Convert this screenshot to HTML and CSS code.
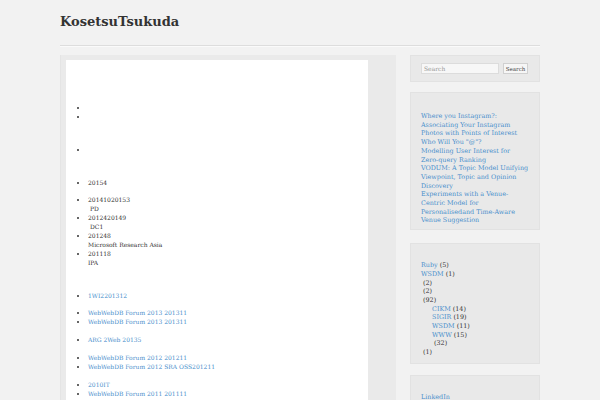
FILE: index.html
```html
<!DOCTYPE html>
<html>
<head>
<meta charset="utf-8">
<link rel="stylesheet" href="styles.css">
</head>
<body>
<div class="page">
  <header class="site-header">
    <div class="site-title">KosetsuTsukuda</div>
  </header>
  <div class="columns">
    <div class="main-wrap">
      <div class="main-box">
        <ul class="list top1"><li></li><li></li></ul>
        <ul class="list sec"><li></li></ul>
        <ul class="list sec"><li>20154</li></ul>
        <ul class="list sub">
          <li>20141020153<br><span class="ind">PD</span></li>
          <li>2012420149<br><span class="ind">DC1</span></li>
          <li>201248<br>Microsoft Research Asia</li>
          <li>201118<br>IPA</li>
        </ul>
        <ul class="list sec"><li><a href="#">1WI2201312</a></li></ul>
        <ul class="list sub">
          <li><a href="#">WebWebDB Forum 2013 201311</a></li>
          <li><a href="#">WebWebDB Forum 2013 201311</a></li>
        </ul>
        <ul class="list sub2"><li><a href="#">ARG 2Web 20135</a></li></ul>
        <ul class="list sub2">
          <li><a href="#">WebWebDB Forum 2012 201211</a></li>
          <li><a href="#">WebWebDB Forum 2012 SRA OSS201211</a></li>
        </ul>
        <ul class="list sub2">
          <li><a href="#">2010IT</a></li>
          <li><a href="#">WebWebDB Forum 2011 201111</a></li>
        </ul>
      </div>
    </div>
    <aside class="sidebar">
      <div class="widget search">
        <input class="search-input" type="text" placeholder="Search">
        <button class="search-btn">Search</button>
      </div>
      <div class="widget papers">
        <a href="#">Where you Instagram?: Associating Your Instagram Photos with Points of Interest</a><br>
        <a href="#">Who Will You "@"?<br>Modelling User Interest for Zero-query Ranking</a><br>
        <a href="#">VODUM: A Topic Model Unifying Viewpoint, Topic and Opinion Discovery</a><br>
        <a href="#">Experiments with a Venue-Centric Model for Personalisedand Time-Aware Venue Suggestion</a>
      </div>
      <div class="widget cats">
        <div class="cat"><a href="#">Ruby</a> (5)</div>
        <div class="cat"><a href="#">WSDM</a> (1)</div>
        <div class="cat sp"> (2)</div>
        <div class="cat sp"> (2)</div>
        <div class="cat sp"> (92)</div>
        <div class="cat child"><a href="#">CIKM</a> (14)</div>
        <div class="cat child"><a href="#">SIGIR</a> (19)</div>
        <div class="cat child"><a href="#">WSDM</a> (11)</div>
        <div class="cat child"><a href="#">WWW</a> (15)</div>
        <div class="cat child sp"> (32)</div>
        <div class="cat sp"> (1)</div>
      </div>
      <div class="widget links">
        <a href="#">LinkedIn</a>
      </div>
    </aside>
  </div>
</div>
</body>
</html>
```
FILE: styles.css
```css
html, body {
  margin: 0;
  padding: 0;
  background: #f2f2f2;
  color: #333;
  font-family: "DejaVu Serif", serif;
}
a { color: #4a8fcc; text-decoration: none; }
.page {
  width: 480px;
  margin-left: 60px;
}
.site-header {
  height: 45px;
  border-bottom: 1px solid #dddddd;
  box-shadow: 0 1px 0 #fafafa;
}
.site-title {
  font-size: 13px;
  font-weight: bold;
  line-height: 13px;
  padding-top: 15px;
}
.columns {
  display: flex;
  gap: 14px;
  margin-top: 9px;
  align-items: flex-start;
}
.main-wrap {
  width: 336px;
  background: #eaeaea;
  border-left: 1px solid #e4e4e4;
  padding: 5px 30px 0 5px;
  box-sizing: border-box;
  height: 345px;
}
.main-box {
  background: #fff;
  width: 302px;
  height: 340px;
  padding-top: 43px;
  box-sizing: border-box;
  font-size: 6px;
  line-height: 9px;
  overflow: hidden;
}
.list {
  margin: 0;
  padding-left: 22px;
  list-style: disc;
}
.list li { min-height: 9px; }
.sec { margin-top: 24px; }
.sub { margin-top: 8px; }
.sub2 { margin-top: 9px; }
.ind { padding-left: 2px; }
.sidebar {
  width: 130px;
  display: flex;
  flex-direction: column;
  font-size: 6.4px;
  line-height: 8.7px;
}
.widget {
  background: #e9e9e9;
  border: 1px solid #e2e2e2;
  padding: 0 10px;
}
.search {
  height: 25px;
  display: flex;
  align-items: center;
  gap: 4px;
}
.search-input {
  width: 78px;
  height: 11px;
  box-sizing: border-box;
  border: 1px solid #dcdcdc;
  background: #f7f7f7;
  font-family: "DejaVu Serif", serif;
  font-size: 6px;
  padding: 0 2px;
  margin: 0;
}
.search-input::placeholder { color: #999; }
.search-btn {
  width: 25px;
  height: 11px;
  padding: 0;
  margin: 0;
  border: 1px solid #d0d0d0;
  background: #f6f6f6;
  font-family: "DejaVu Serif", serif;
  font-size: 5.5px;
  color: #444;
}
.papers {
  margin-top: 10px;
  padding-top: 19px;
  padding-bottom: 4px;
}
.cats {
  margin-top: 13px;
  padding-top: 17px;
  padding-bottom: 6px;
}
.cat.sp { padding-left: 2px; }
.cat.child { padding-left: 11px; }
.cat.child.sp { padding-left: 13px; }
.links {
  margin-top: 11px;
  padding-top: 17px;
  height: 8px;
}
```
